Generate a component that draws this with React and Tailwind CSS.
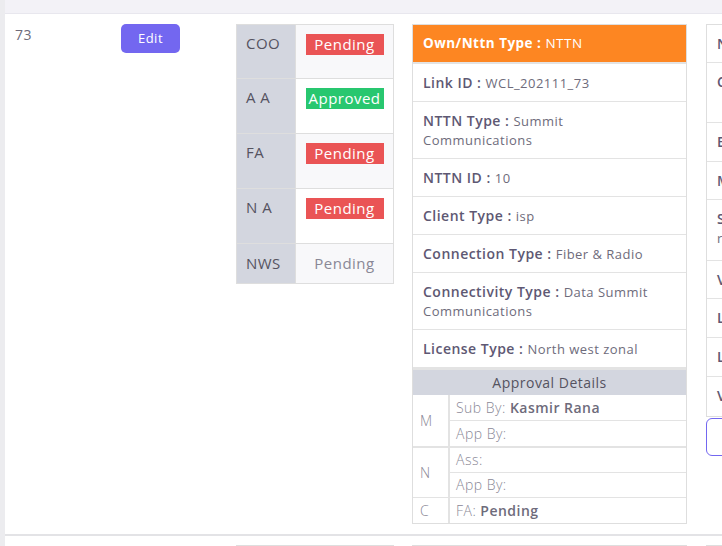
import React from 'react';

const approvals = [
  { role: 'COO', status: 'Pending' },
  { role: 'A A', status: 'Approved' },
  { role: 'FA', status: 'Pending' },
  { role: 'N A', status: 'Pending' },
];

const linkInfo = [
  { label: 'Link ID', value: 'WCL_202111_73' },
  { label: 'NTTN Type', value: 'Summit Communications' },
  { label: 'NTTN ID', value: '10' },
  { label: 'Client Type', value: 'isp' },
  { label: 'Connection Type', value: 'Fiber & Radio' },
  { label: 'Connectivity Type', value: 'Data Summit Communications' },
  { label: 'License Type', value: 'North west zonal' },
];

const siteInfo = [
  ['Name', 'Kasmir Rana', 'h-[38px]'],
  ['Capacity', '100 Mbps', 'h-[60px]'],
  ['Email', 'info@summit.pk', 'h-[39px]'],
  ['Mobile', '03001234567', 'h-[38px]'],
  ['Service Description', 'Dedicated redundant link', 'h-[61px]'],
  ['VLAN', '1020', 'h-[38px]'],
  ['Latitude', '31.52', 'h-[39px]'],
  ['Longitude', '74.35', 'h-[39px]'],
  ['VPN', 'No', 'h-[39px]'],
];

function Badge({ status }) {
  const color = status === 'Approved' ? 'bg-[#28c76f]' : 'bg-[#ea5455]';
  return (
    <span className={`block w-[78px] h-[21px] leading-[21px] text-center text-white text-[15px] ${color}`}>
      {status}
    </span>
  );
}

function InfoRow({ label, value, last, extra = '' }) {
  return (
    <div className={`px-[10px] pt-[9px] pb-[9px] leading-[19px] text-[14px] ${extra} ${last ? '' : 'border-b border-[#e3e3e3]'}`}>
      <span className="font-semibold text-[#5e5873]">{label} :</span>{' '}
      <span className="text-[13px] leading-none">{value}</span>
    </div>
  );
}

export default function App() {
  return (
    <div
      className="w-[722px] h-[546px] overflow-hidden bg-white flex text-[#6e6b7b] tracking-[0.03em]"
      style={{ fontFamily: '"Open Sans", "Liberation Sans", sans-serif' }}
    >
      {/* left edge of the scroll area */}
      <div className="w-[5px] shrink-0 bg-[#ececef]" />

      <div className="flex-1 min-w-0 flex flex-col">
        {/* table head strip */}
        <div className="h-[14px] shrink-0 bg-[#f3f2f7] border-b border-[#e8e7ee]" />

        {/* row 73 */}
        <div className="flex items-start shrink-0 pt-[10px] pb-[10px] border-b-2 border-[#e3e3e6]">
          <div className="w-[106px] shrink-0 pl-[10px] text-[14px] leading-[20px] pt-[1px] text-[#6e6b7b]">73</div>

          <div className="w-[115px] shrink-0 pl-[10px]">
            <button className="w-[59px] h-[29px] rounded-[5px] bg-[#7367f0] text-white text-[13px] pt-[1px]">Edit</button>
          </div>

          {/* approval status */}
          <div className="ml-[10px] w-[158px] shrink-0 border border-[#dedede]">
            {approvals.map((a, i) => (
              <div key={a.role} className={`flex border-b border-[#dedede] ${i === 0 ? 'h-[54px]' : 'h-[55px]'}`}>
                <div className="w-[59px] shrink-0 bg-[#d3d6df] border-r border-[#dedede] pl-[9px] pt-[8px] text-[15px] leading-[20px] text-[#55535f]">
                  {a.role}
                </div>
                <div className={`flex-1 flex justify-center items-start pt-[9px] ${i % 2 === 0 ? 'bg-[#f8f8fa]' : 'bg-white'}`}>
                  <Badge status={a.status} />
                </div>
              </div>
            ))}
            <div className="flex h-[39px]">
              <div className="w-[59px] shrink-0 bg-[#d3d6df] border-r border-[#dedede] pl-[9px] pt-[9px] text-[15px] leading-[20px] text-[#55535f]">NWS</div>
              <div className="flex-1 text-center pt-[9px] bg-[#f8f8fa] text-[15px] leading-[20px] text-[#8a8896]">Pending</div>
            </div>
          </div>

          {/* link details */}
          <div className="ml-[18px] w-[275px] shrink-0 border border-[#dedede]">
            <div className="h-[39px] bg-[#fd8622] border-b-2 border-[#e3e3e3] px-[10px] flex items-center text-white text-[13.5px]">
              <span className="font-bold">Own/Nttn Type :</span>
              <span className="ml-[4px]">NTTN</span>
            </div>
            {linkInfo.map((r) => (
              <InfoRow key={r.label} label={r.label} value={r.value} />
            ))}

            <div className="h-[27px] border-t-2 border-[#e3e3e3] bg-[#d3d6df] text-center text-[14px] leading-[25px] text-[#55535f]">
              Approval Details
            </div>

            <div className="flex border-b-2 border-[#e3e3e3] text-[14px] text-[#8a8896] font-light">
              <div className="w-[37px] shrink-0 border-r-2 border-[#e3e3e3] pl-[7px] flex items-center">M</div>
              <div className="flex-1">
                <div className="h-[26px] border-b border-[#e3e3e3] pl-[6px] leading-[25px]">
                  Sub By: <span className="font-semibold text-[#6e6b7b]">Kasmir Rana</span>
                </div>
                <div className="h-[25px] pl-[6px] leading-[25px]">App By:</div>
              </div>
            </div>
            <div className="flex border-b border-[#e3e3e3] text-[14px] text-[#8a8896] font-light">
              <div className="w-[37px] shrink-0 border-r-2 border-[#e3e3e3] pl-[7px] flex items-center">N</div>
              <div className="flex-1">
                <div className="h-[25px] border-b border-[#e3e3e3] pl-[6px] leading-[24px]">Ass:</div>
                <div className="h-[24px] pl-[6px] leading-[24px]">App By:</div>
              </div>
            </div>
            <div className="flex h-[25px] text-[14px] text-[#8a8896] font-light">
              <div className="w-[37px] shrink-0 border-r-2 border-[#e3e3e3] pl-[7px] leading-[25px]">C</div>
              <div className="flex-1 pl-[6px] leading-[25px]">
                FA: <span className="font-semibold text-[#6e6b7b]">Pending</span>
              </div>
            </div>
          </div>

          {/* client / site details, runs past the window edge */}
          <div className="ml-[19px] w-[275px] shrink-0">
            <div className="border border-[#dedede]">
              {siteInfo.map(([l, v, extra], i) => (
                <InfoRow key={l} label={l} value={v} extra={extra} last={i === siteInfo.length - 1} />
              ))}
            </div>
            <button className="mt-[1px] w-full h-[38px] rounded-[6px] border border-[#7367f0] text-[#7367f0] text-[13px]">
              View Details
            </button>
          </div>
        </div>

        {/* next row, cut off by the window */}
        <div className="flex items-start pt-[9px]">
          <div className="ml-[231px] w-[158px] h-[10px] shrink-0 border-t border-[#dedede]" />
          <div className="ml-[18px] w-[275px] h-[10px] shrink-0 border-t border-[#dedede]" />
          <div className="ml-[19px] w-[275px] h-[10px] shrink-0 border-t border-[#dedede]" />
        </div>
      </div>
    </div>
  );
}
